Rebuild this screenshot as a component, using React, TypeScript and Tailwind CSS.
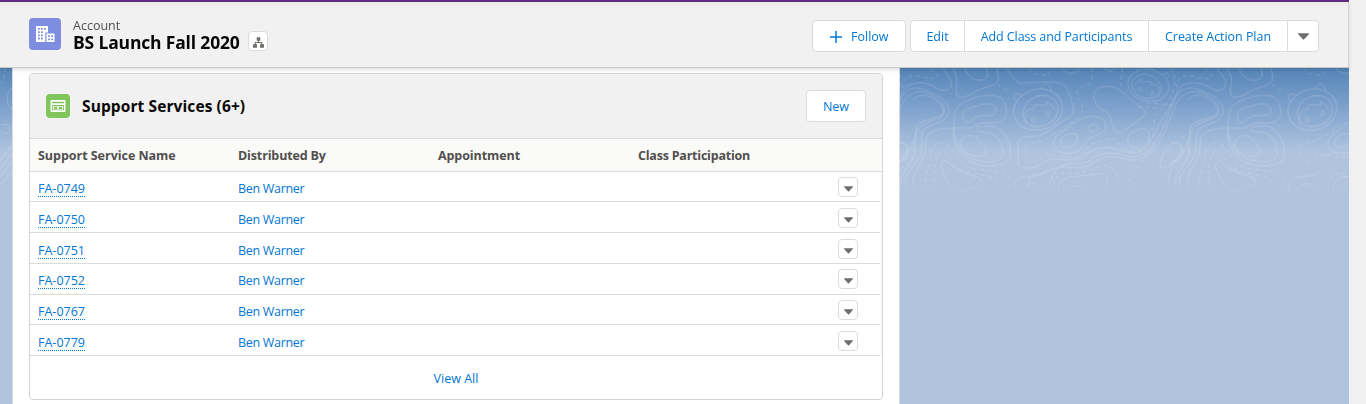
import { ReactNode } from "react";

const rows = [
  { name: "FA-0749", by: "Ben Warner", layout: "h-[30px]" },
  { name: "FA-0750", by: "Ben Warner", layout: "h-[31px] pt-px" },
  { name: "FA-0751", by: "Ben Warner", layout: "h-[31px] pt-px" },
  { name: "FA-0752", by: "Ben Warner", layout: "h-[31px]" },
  { name: "FA-0767", by: "Ben Warner", layout: "h-[30px]" },
  { name: "FA-0779", by: "Ben Warner", layout: "h-[31px] pt-px" },
];

const columns = [
  { label: "Support Service Name", tracking: "tracking-[-0.03px]" },
  { label: "Distributed By", tracking: "tracking-[-0.14px]" },
  { label: "Appointment", tracking: "tracking-[-0.08px]" },
  { label: "Class Participation", tracking: "tracking-[-0.22px]" },
];

const contours = [
  "M152 0C150 30 190 55 184 76C176 96 150 94 132 80C105 64 70 66 52 78C38 88 34 110 22 130C5 165 -12 180 -25 215C-50 265 -75 285 -105 278C-140 270 -160 258 -195 264C-235 275 -245 296 -265 298C-300 304 -335 288 -360 306C-385 325 -400 326 -424 324C-445 320 -438 300 -438 275C-438 245 -445 232 -410 230C-365 230 -350 215 -330 200C-305 182 -270 170 -272 150C-280 110 -290 78 -310 70C-345 62 -400 68 -435 70C-450 62 -462 38 -475 24",
  "M-355 390C-340 370 -338 335 -310 318C-285 305 -240 318 -222 300C-195 275 -155 278 -130 284C-90 296 -60 290 -35 260C-5 215 10 165 30 120C45 85 75 76 110 92C150 108 180 125 176 160C168 190 125 190 105 205C88 220 100 250 92 280C82 310 50 330 46 360L50 410",
  "M-415 385C-400 350 -410 345 -375 342C-345 335 -330 322 -300 320C-260 325 -235 324 -212 308C-180 283 -150 290 -122 296C-80 308 -50 295 -20 255C5 215 15 175 35 132C55 95 90 85 125 105C160 125 170 145 158 165C145 186 105 180 86 205C70 225 80 265 72 290C64 315 28 330 30 395",
  "M70 120C85 96 130 106 150 132C168 160 160 165 145 170C115 182 82 180 78 205C75 230 75 250 60 270C40 290 10 315 12 390",
  "M191 205C145 205 115 210 108 238C105 275 108 290 85 320C70 345 60 365 80 410",
  "M188 24C215 60 188 90 202 107C216 120 243 104 258 94C285 78 326 80 325 55L320 24",
  "M222 24C235 48 248 60 266 61C292 62 302 40 286 24",
  "M191 206C193 170 190 145 220 127C255 110 282 104 315 107C345 112 345 135 350 155C348 185 325 190 295 189C268 187 258 195 247 203C225 208 200 200 191 206C185 245 203 272 218 289C235 307 260 318 300 317C345 317 365 303 361 275C360 240 338 206 314 200C290 195 270 201 265 200C248 207 265 218 278 216C310 216 327 231 335 257C342 280 340 303 300 306C255 305 220 290 207 260C203 240 190 230 191 206",
  "M219 165C220 143 250 143 268 136C290 128 314 130 320 150C315 174 290 164 270 167C248 171 242 188 232 187C224 185 217 179 219 165Z",
  "M214 245C220 224 250 220 266 239C280 258 292 260 286 279C275 297 246 288 225 277C214 268 211 260 214 245Z",
  "M155 308C162 294 175 305 185 318C210 338 248 345 270 355C280 370 263 378 240 386C210 400 188 396 177 370C165 345 147 325 155 308Z",
  "M20 250C40 240 58 258 55 282C52 298 38 306 20 302",
  "M372 400C368 370 378 352 418 350C440 350 460 342 470 329",
  "M385 409C395 385 415 366 436 371C455 388 458 402 468 385",
  "M505 410C500 370 515 355 545 350C580 348 590 343 630 342C665 345 650 375 640 410",
  "M515 410C520 380 548 374 575 380C598 388 590 400 588 410",
  "M514 25C530 43 556 48 572 24M642 24C655 38 670 32 675 24",
  "M612 115C609 85 630 77 660 80C700 88 710 110 735 128C755 145 778 160 762 169C730 190 700 216 684 220C664 214 670 170 645 153C620 144 616 130 612 115Z",
  "M491 250C492 220 525 215 550 190C580 168 620 160 642 180C655 200 642 218 618 225C590 232 578 264 560 275C535 287 486 280 491 250Z",
  "M511 245C516 226 542 214 560 224C568 240 552 260 535 263C520 264 509 258 511 245Z",
  "M595 205C596 195 608 190 620 196C630 204 622 214 609 215C600 215 594 212 595 205Z",
  "M712 239C715 218 742 202 768 208C784 216 780 240 765 258C748 272 714 264 712 239Z",
  "M810 322C810 300 825 256 850 250C874 245 880 260 870 285C857 310 835 318 815 325Z",
];

const dashed = [
  "M38 85C34 50 55 45 90 49C110 53 130 62 142 50C145 40 130 35 120 22",
  "M322 74L360 96M416 24C435 48 455 43 473 46C480 40 475 30 480 24",
  "M607 24C607 55 606 72 584 78C560 85 553 99 568 118C585 145 580 160 555 180C525 200 490 220 470 235C440 255 400 235 407 275C406 315 445 310 460 289C485 276 520 298 565 291C590 280 582 258 615 248C650 238 675 225 688 252C710 278 750 278 780 260",
  "M110 410C96 370 115 330 122 290C122 250 150 235 178 260C210 288 215 325 260 328C310 330 360 335 360 365C355 395 325 400 285 410",
  "M135 410C128 370 130 310 145 278C170 265 178 300 205 325C240 344 300 340 319 363C310 390 270 400 250 406",
  "M490 400C490 350 505 335 530 340C580 345 595 325 635 317C680 315 685 345 683 370C670 385 660 395 660 410",
  "M697 24C690 60 695 80 694 94M843 24C860 50 858 84 834 126C820 155 790 160 792 180L788 265C765 285 745 325 722 350C710 370 715 395 725 410",
  "M28 230C55 220 75 240 70 280C60 320 35 320 25 330M745 140L812 145M770 130L850 135",
];

function Bear({ transform }: { transform: string }) {
  return (
    <g transform={transform}>
      <ellipse cx="0" cy="0" rx="74" ry="61" transform="rotate(-15)" />
      <ellipse cx="5" cy="7" rx="54" ry="45" transform="rotate(-25)" />
      <path d="M-66 -25C-80 -50 -67 -50 -47 -42M10 -63C15 -82 36 -84 40 -56" />
      <path d="M-38 45C-32 28 -46 30 -35 18C-40 12 -40 5 -28 0C-12 -2 -5 -6 -14 -12C5 -20 17 -9 28 -15L23 -25L43 -12L48 0" />
      <ellipse cx="-15" cy="30" rx="5" ry="8" />
      <ellipse cx="30" cy="12" rx="5" ry="8" />
    </g>
  );
}

function Contours() {
  const shifts = [-823, 0, 823];
  return (
    <svg className="h-[140px] w-[1349px]" viewBox="0 0 1349 140" fill="none" stroke="white" strokeLinejoin="round">
      <defs>
        <linearGradient id="fade" x1="0" y1="0" x2="0" y2="140" gradientUnits="userSpaceOnUse">
          <stop offset="0" stopColor="white" stopOpacity="0.19" />
          <stop offset="0.8" stopColor="white" stopOpacity="0.24" />
          <stop offset="0.93" stopColor="white" stopOpacity="0" />
        </linearGradient>
        <mask id="visible" maskUnits="userSpaceOnUse" x="0" y="0" width="1349" height="140">
          <rect width="1349" height="140" fill="url(#fade)" stroke="none" />
        </mask>
        <g id="tile" strokeWidth="3">
          {contours.map((d) => (
            <path key={d} d={d} />
          ))}
          {dashed.map((d) => (
            <path key={d} d={d} strokeDasharray="12 10" />
          ))}
          <Bear transform="translate(444 149)" />
          <Bear transform="translate(775 76) scale(-.84 .78)" />
        </g>
      </defs>
      <g mask="url(#visible)">
        <g transform="translate(890 -8) scale(.33333)">
          {shifts.map((s) => (
            <use key={s} href="#tile" transform={`translate(${s} 0)`} />
          ))}
        </g>
        <path d="M12 20C6 24 5 38 12 41M2 57C6 55 11 58 10 62C9 66 4 66 1 63M0 93L12 77M0 101L12 85M0 109L12 94M0 117L12 105" />
        <path d="M5 0C5 6 4 10 1 15" strokeDasharray="4 3" />
      </g>
    </svg>
  );
}

function Caret({ className }: { className: string }) {
  return (
    <svg className={className} viewBox="0 0 10 6" fill="#706e6b">
      <path d="M0.3 0H9.7Q10.2 0.3 9.8 0.9L5.6 5.6Q5 6.2 4.4 5.6L0.2 0.9Q-0.2 0.3 0.3 0Z" />
    </svg>
  );
}

function GroupButton({ className, children }: { className: string; children: ReactNode }) {
  return (
    <button className={`flex h-full shrink-0 items-center justify-center whitespace-nowrap border-r border-[#dddbda] pt-0.5 ${className}`}>
      {children}
    </button>
  );
}

export default function App() {
  return (
    <div className="flex h-[404px] w-[1366px] overflow-hidden bg-[#f0f0f0] font-['Open_Sans','Noto_Sans',sans-serif] text-[12.5px] text-[#0176d3]">
      <div className="flex w-[1349px] flex-col">
        <div className="h-[2px] shrink-0 bg-[#642b85]" />
        <header className="relative z-10 flex h-[66px] shrink-0 items-start border-r border-b border-r-[#d4d4d4] border-b-[#c9c9c9] bg-[#f1f1f1] bg-linear-to-b from-[#e9e9e9] to-[#f1f1f1] to-[5px] pl-[29px] shadow-[0_2px_4px_rgba(0,0,0,0.12)]">
          <span className="mt-4 flex size-8 items-center justify-center rounded bg-[#7f8de1]">
            <svg className="size-5" viewBox="0 0 20 20" fill="white">
              <path
                fillRule="evenodd"
                d="M1.5 2H12.5Q13 2 13 2.5V8.5H11Q10.3 8.5 10.3 9.3V18H1V2.5Q1 2 1.5 2ZM3 4V5.8H4.8V4ZM6 4V5.8H7.8V4ZM9 4V5.8H10.8V4ZM3 7.2V9H4.8V7.2ZM6 7.2V9H7.8V7.2ZM3 10.4V12.2H4.8V10.4ZM6 10.4V12.2H7.8V10.4ZM3 13.6V15.4H4.8V13.6ZM6 13.6V15.4H7.8V13.6Z"
              />
              <path
                fillRule="evenodd"
                d="M12 9.5H19Q19.5 9.5 19.5 10V18H11.5V10Q11.5 9.5 12 9.5ZM13.2 11.2V13H15V11.2ZM16.3 11.2V13H18.1V11.2ZM13.2 14.4V16.2H15V14.4ZM16.3 14.4V16.2H18.1V14.4Z"
              />
            </svg>
          </span>
          <div className="ml-3 flex flex-col pt-4">
            <span className="text-[12.5px] leading-[15px] text-[#514f4d]">Account</span>
            <div className="flex items-start">
              <h1 className="w-[175px] whitespace-nowrap text-[17.5px] leading-[19px] font-bold tracking-[-0.17px] text-[#080707]">
                BS Launch Fall 2020
              </h1>
              <button className="-mt-0.5 flex size-5 items-center justify-center rounded border border-[#dddbda] bg-white">
                <svg className="mt-0.5 size-[11px]" viewBox="0 0 11 11" fill="#706e6b">
                  <path d="M3.7 0.3H7.3V3.8H6V5H9.3V7.2H11V10.7H7V7.2H8.2V6H2.8V7.2H4V10.7H0V7.2H1.7V5H5V3.8H3.7Z" />
                </svg>
              </button>
            </div>
          </div>
          <div className="mt-[18px] mr-[29px] ml-auto flex h-8 gap-1">
            <button className="flex w-[94px] items-center rounded border border-[#dddbda] bg-white pl-[17px]">
              <svg className="mt-px size-3" viewBox="0 0 12 12" stroke="#0176d3" strokeWidth="1.5">
                <path d="M6 0V12M0 6H12" />
              </svg>
              <span className="ml-[9px] pt-0.5">Follow</span>
            </button>
            <div className="flex w-[409px] overflow-hidden rounded border border-[#dddbda] bg-white">
              <GroupButton className="w-[54px]">Edit</GroupButton>
              <GroupButton className="w-[184px] tracking-[-0.1px]">Add Class and Participants</GroupButton>
              <GroupButton className="w-[139px] tracking-[-0.05px]">Create Action Plan</GroupButton>
              <button className="flex flex-1 items-center justify-center">
                <Caret className="h-[7px] w-[11px]" />
              </button>
            </div>
          </div>
        </header>

        <main className="relative flex flex-1 bg-[#b0c4df] bg-linear-to-b from-[#5485b7] via-[#7b9fcb] via-[36px] to-[#b0c4df] to-[84px] pl-3">
          <div className="pointer-events-none absolute top-0 left-0">
            <Contours />
          </div>
          <section className="relative w-[888px] border-x border-[#dddbda] bg-white pt-[5px] pl-4">
            <article className="flex h-[327px] w-[854px] flex-col overflow-hidden rounded border border-[#d4d4d4]">
              <div className="flex h-[65px] shrink-0 items-center border-b border-[#dddbda] bg-[#f1f1f1] px-4">
                <span className="flex size-6 items-center justify-center rounded bg-[#7fc65d]">
                  <svg className="h-3 w-4" viewBox="0 0 16 12">
                    <rect x="0.5" y="0" width="15" height="12" rx="1.3" fill="white" />
                    <path d="M2 1.8H14V3.2H2ZM2 5H14V10.3H2Z" fill="#7fc65d" />
                    <path d="M2.8 6.2H13.2V9.6H2.8Z" fill="white" />
                    <path d="M4 7H7.2V9H4ZM8.8 7H12V9H8.8Z" fill="#7fc65d" />
                  </svg>
                </span>
                <h2 className="ml-3 whitespace-nowrap pt-0.5 text-[15.5px] font-bold tracking-[0.1px] text-[#080707]">
                  Support Services (6+)
                </h2>
                <button className="ml-auto h-8 w-[60px] rounded border border-[#dddbda] bg-white pt-0.5">New</button>
              </div>
              <div className="flex h-[33px] shrink-0 items-center border-b border-[#dddbda] bg-[#fafaf9] pt-0.5 pl-2 font-bold text-[#514f4d]">
                {columns.map((c) => (
                  <span key={c.label} className={`w-[200px] whitespace-nowrap ${c.tracking}`}>
                    {c.label}
                  </span>
                ))}
              </div>
              <div className="shrink-0 border-r-2 border-[#fafaf9]">
                {rows.map((r) => (
                  <div key={r.name} className={`flex items-start border-b border-[#dddbda] pl-2 ${r.layout}`}>
                    <div className="flex w-[200px] pt-2">
                      <a className="h-[17px] border-b border-dotted border-[#0176d3] leading-[17px]">{r.name}</a>
                    </div>
                    <span className="pt-2 leading-[17px] tracking-[-0.3px]">{r.by}</span>
                    <button className="mt-[5px] mr-[22px] ml-auto flex size-5 items-center justify-center rounded border border-[#dddbda] bg-white">
                      <Caret className="mt-[3px] h-[6px] w-[9px]" />
                    </button>
                  </div>
                ))}
              </div>
              <div className="flex flex-1 items-center justify-center pt-1">
                <a>View All</a>
              </div>
            </article>
          </section>
        </main>
      </div>
    </div>
  );
}
